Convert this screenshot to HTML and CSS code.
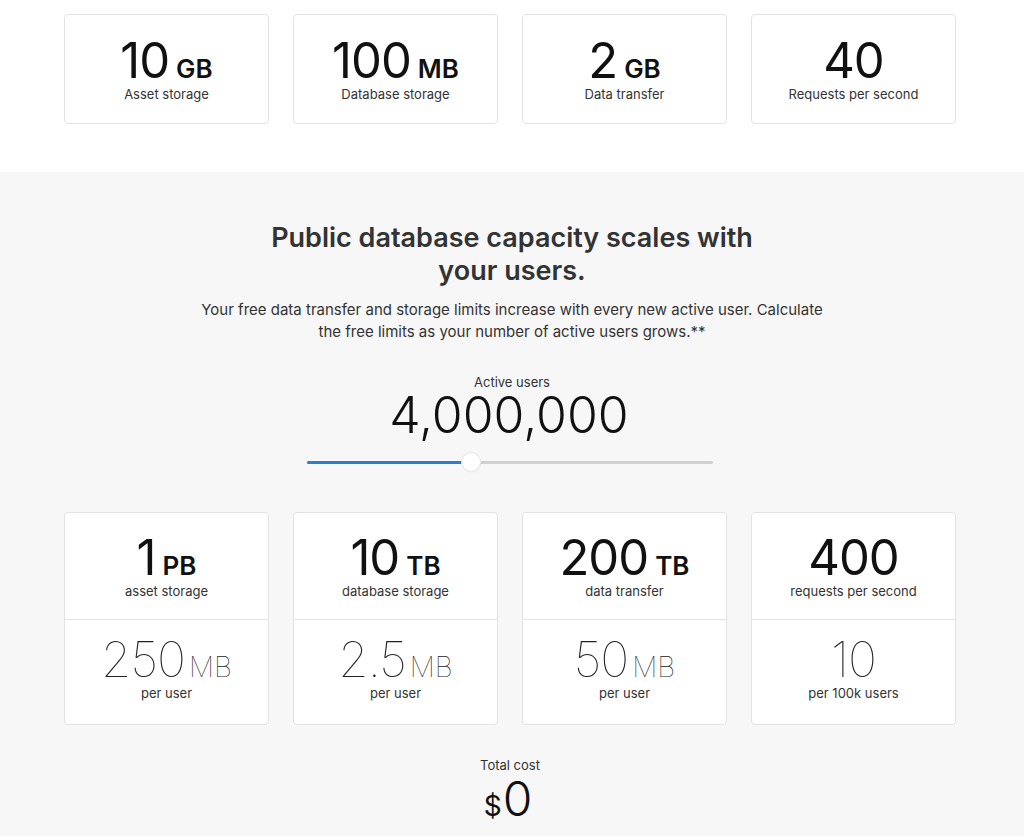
FILE: index.html
```html
<!DOCTYPE html>
<html lang="en">
<head>
<meta charset="utf-8">
<title>Public database capacity</title>
<link rel="stylesheet" href="styles.css">
</head>
<body>
<section class="top">
  <div class="grid">
    <div class="card simple">
      <div class="num">10<span class="unit">GB</span></div>
      <div class="label">Asset storage</div>
    </div>
    <div class="card simple">
      <div class="num">100<span class="unit">MB</span></div>
      <div class="label">Database storage</div>
    </div>
    <div class="card simple">
      <div class="num">2<span class="unit">GB</span></div>
      <div class="label">Data transfer</div>
    </div>
    <div class="card simple">
      <div class="num">40</div>
      <div class="label">Requests per second</div>
    </div>
  </div>
</section>
<section class="scale">
  <h2 class="title">Public database capacity scales with your users.</h2>
  <p class="intro">Your free data transfer and storage limits increase with every new active user. Calculate the free limits as your number of active users grows.**</p>
  <div class="users-label">Active users</div>
  <div class="users">4,000,000</div>
  <div class="slider">
    <div class="fill" style="width:40.4%"></div>
    <div class="thumb"></div>
  </div>
  <div class="grid">
    <div class="card split">
      <div class="half">
        <div class="num">1<span class="unit">PB</span></div>
        <div class="label">asset storage</div>
      </div>
      <div class="half">
        <div class="num thin">250<span class="unit thin">MB</span></div>
        <div class="label">per user</div>
      </div>
    </div>
    <div class="card split">
      <div class="half">
        <div class="num">10<span class="unit">TB</span></div>
        <div class="label">database storage</div>
      </div>
      <div class="half">
        <div class="num thin">2.5<span class="unit thin">MB</span></div>
        <div class="label">per user</div>
      </div>
    </div>
    <div class="card split">
      <div class="half">
        <div class="num">200<span class="unit">TB</span></div>
        <div class="label">data transfer</div>
      </div>
      <div class="half">
        <div class="num thin">50<span class="unit thin">MB</span></div>
        <div class="label">per user</div>
      </div>
    </div>
    <div class="card split">
      <div class="half">
        <div class="num">400</div>
        <div class="label">requests per second</div>
      </div>
      <div class="half">
        <div class="num thin">10</div>
        <div class="label">per 100k users</div>
      </div>
    </div>
  </div>
  <div class="total-label">Total cost</div>
  <div class="total"><span class="dollar">$</span>0</div>
</section>
</body>
</html>
```

FILE: styles.css
```css
html, body {
  margin: 0;
  padding: 0;
}
body {
  font-family: Inter, "Noto Sans", "Liberation Sans", sans-serif;
  color: #1d1d1f;
  background: #f7f7f7;
  width: 1024px;
  min-height: 836px;
  overflow: hidden;
}
.top {
  background: #fff;
  padding: 14px 0 48px;
}
.grid {
  width: 892px;
  margin: 0 0 0 64px;
  display: grid;
  grid-template-columns: repeat(4, 1fr);
  gap: 24px;
}
.card {
  background: #fff;
  border: 1px solid #e3e3e3;
  border-radius: 4px;
  box-sizing: border-box;
}
.simple {
  height: 110px;
  display: flex;
  flex-direction: column;
  align-items: center;
  padding-top: 22px;
}
.num {
  font-size: 49px;
  line-height: 48px;
  font-weight: 400;
  letter-spacing: -1px;
  color: #111;
}
.unit {
  font-size: 26px;
  line-height: 1;
  font-weight: 600;
  margin-left: 7px;
  letter-spacing: 0;
}
.label {
  font-size: 13px;
  line-height: 16px;
  color: #333;
  margin-top: 1px;
}
.scale {
  padding-top: 49px;
  display: flex;
  flex-direction: column;
  align-items: center;
}
.scale .grid {
  align-self: flex-start;
}
.title {
  margin: 0;
  max-width: 520px;
  text-align: center;
  font-size: 27px;
  line-height: 33px;
  font-weight: 600;
  color: #333;
}
.intro {
  margin: 12px 0 0;
  max-width: 640px;
  text-align: center;
  font-size: 15px;
  line-height: 22px;
  color: #333;
}
.users-label {
  margin-top: 31px;
  font-size: 13px;
  line-height: 16px;
  color: #333;
}
.users {
  font-size: 50px;
  line-height: 50px;
  font-weight: 300;
  color: #111;
  margin-right: 6px;
}
.slider {
  position: relative;
  width: 406px;
  height: 3px;
  margin-top: 21px;
  margin-bottom: 8px;
  margin-right: 4px;
  background: #d0d0d0;
  border-radius: 2px;
}
.fill {
  height: 3px;
  background: #2d7dd2;
  border-radius: 2px;
}
.thumb {
  position: absolute;
  left: calc(40.4% - 9px);
  top: -8px;
  width: 18px;
  height: 18px;
  border-radius: 50%;
  background: #fff;
  box-shadow: 0 0 0 1px #e6e6e6, 0 1px 2px rgba(0,0,0,0.08);
}
.scale .grid {
  margin-top: 40px;
}
.split {
  display: flex;
  flex-direction: column;
  height: 213px;
}
.half {
  height: 106px;
  display: flex;
  flex-direction: column;
  align-items: center;
  padding-top: 21px;
  box-sizing: border-box;
}
.half + .half {
  border-top: 1px solid #e3e3e3;
  padding-top: 16px;
}
.thin {
  font-weight: 100;
  color: #222;
}
.unit.thin {
  font-size: 28px;
  margin-left: 4px;
}
.total-label {
  margin-top: 32px;
  font-size: 13px;
  line-height: 16px;
  color: #333;
  margin-right: 4px;
}
.total {
  font-size: 48px;
  line-height: 48px;
  font-weight: 300;
  color: #111;
  margin-top: 2px;
  margin-right: 8px;
}
.dollar {
  font-size: 28px;
  line-height: 1;
  font-weight: 400;
  margin-right: 1px;
}
```
